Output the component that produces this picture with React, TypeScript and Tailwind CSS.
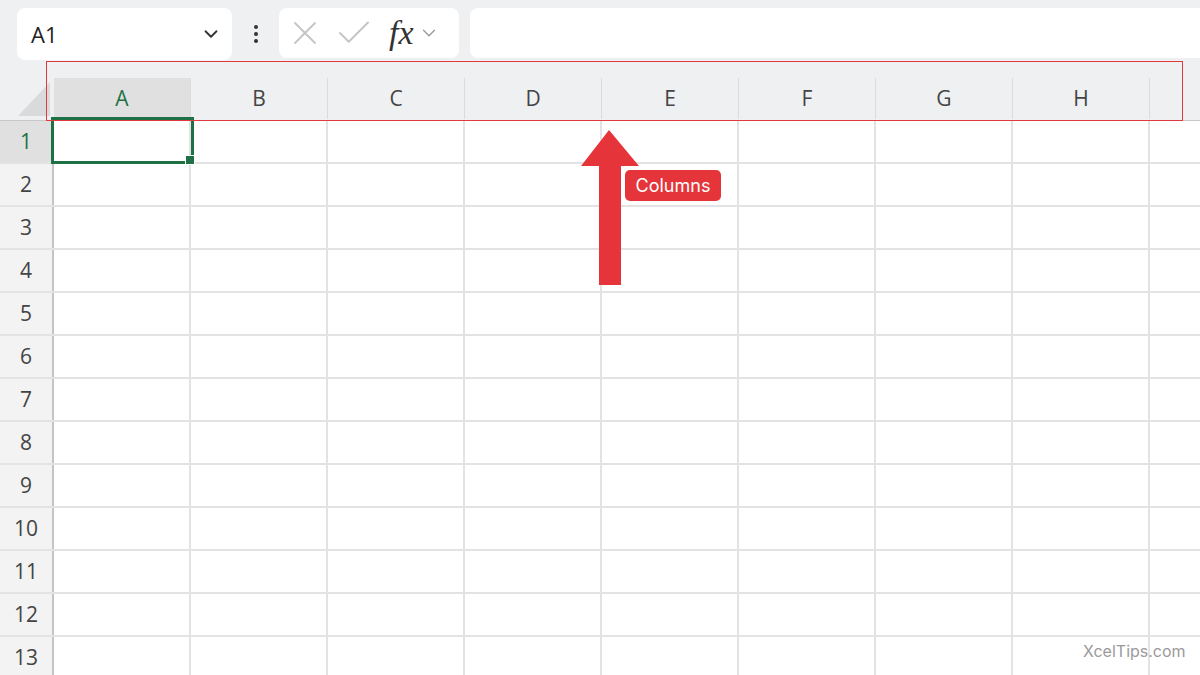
import { ChevronDown, X, Check } from 'lucide-react';

const cols = ['A', 'B', 'C', 'D', 'E', 'F', 'G', 'H', ''];
const rows = Array.from({ length: 13 }, (_, i) => i + 1);

export default function App() {
  return (
    <div
      className="relative w-[1200px] h-[675px] overflow-hidden bg-white"
      style={{ fontFamily: '"Open Sans", "Noto Sans", sans-serif' }}
    >
      {/* formula bar */}
      <div className="flex h-[68px] items-start bg-[#eef0f2] pt-2 pl-[17px]">
        <div className="flex h-[52px] w-[215px] items-center justify-between rounded-lg bg-white pl-[14px] pr-[10px]">
          <span className="text-[22px] text-[#222]">A1</span>
          <ChevronDown size={22} strokeWidth={2} className="text-[#333]" />
        </div>
        <div className="flex h-[52px] w-[47px] flex-col items-center justify-center gap-[3px]">
          <span className="h-[4px] w-[4px] rounded-full bg-[#333]" />
          <span className="h-[4px] w-[4px] rounded-full bg-[#333]" />
          <span className="h-[4px] w-[4px] rounded-full bg-[#333]" />
        </div>
        <div className="flex h-[50px] w-[180px] items-center rounded-lg bg-white pl-[6px]">
          <X size={40} strokeWidth={1.1} className="text-[#c4c4c4]" />
          <Check size={42} strokeWidth={1.1} className="ml-[8px] text-[#c4c4c4]" />
          <span
            className="ml-[14px] text-[34px] italic leading-none text-[#333]"
            style={{ fontFamily: '"Liberation Serif", serif' }}
          >
            fx
          </span>
          <ChevronDown size={22} strokeWidth={1.4} className="ml-[4px] text-[#999]" />
        </div>
        <div className="ml-[11px] h-[50px] flex-1 rounded-l-lg bg-white" />
      </div>

      {/* column headers */}
      <div className="flex h-[53px] items-end border-b border-[#c8c8c8] bg-[#eff0f1] pb-[1px]">
        <div className="relative h-[41px] w-[54px] shrink-0">
          <div
            className="absolute bottom-[3px] right-[4px] h-[34px] w-[32px] bg-[#d9dadb]"
            style={{ clipPath: 'polygon(100% 0, 100% 100%, 0 100%)' }}
          />
        </div>
        {cols.map((c, i) => (
          <div
            key={i}
            className={`flex h-[41px] w-[137px] shrink-0 items-center justify-center border-r border-[#dcdcdc] text-[21px] ${
              c === 'A' ? 'bg-[#e0e0e0] text-[#1e7145]' : 'text-[#444]'
            }`}
          >
            {c}
          </div>
        ))}
      </div>

      {/* grid */}
      {rows.map((r) => (
        <div key={r} className="flex h-[43px] border-b-2 border-[#e3e3e3]">
          <div
            className={`flex w-[54px] shrink-0 items-center justify-center border-r-2 border-[#c4c4c4] text-[21px] ${
              r === 1 ? 'bg-[#e0e0e0] text-[#1e7145]' : 'bg-[#f3f3f3] text-[#444]'
            }`}
          >
            {r}
          </div>
          {cols.map((_, i) => (
            <div key={i} className="w-[137px] shrink-0 border-r-2 border-[#e3e3e3]" />
          ))}
        </div>
      ))}

      {/* selected cell A1 */}
      <div className="absolute left-[51px] top-[117px] h-[47px] w-[143px] border-[3px] border-[#1e7145]" />
      <div className="absolute left-[185px] top-[155px] h-[10px] w-[10px] border border-white bg-[#1e7145]" />

      {/* annotation */}
      <div className="absolute left-[46px] top-[61px] h-[60px] w-[1137px] border border-[#e0393e]" />
      <svg className="absolute left-[578px] top-[128px]" width="64" height="160" viewBox="0 0 64 160">
        <polygon points="31,2 61,38 43,38 43,157 21,157 21,38 3,38" fill="#e5353a" />
      </svg>
      <div
        className="absolute left-[625px] top-[170px] flex h-[31px] w-[96px] items-center justify-center rounded-[5px] bg-[#e5353a] text-[18px] text-white"
        style={{ fontFamily: 'Inter, sans-serif' }}
      >
        Columns
      </div>

      <div
        className="absolute left-[1083px] top-[639px] text-[16px] text-[#9a9a9a]"
        style={{ fontFamily: 'Inter, sans-serif' }}
      >
        XcelTips.com
      </div>
    </div>
  );
}
